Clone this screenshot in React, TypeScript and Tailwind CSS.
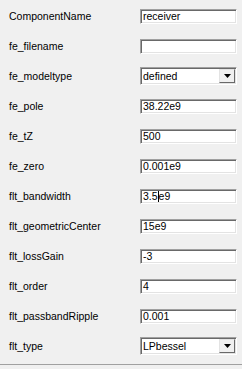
import React from 'react';

type Field = {
  label: string;
  value: string;
  kind?: 'text' | 'select';
  caret?: number;
};

const fields: Field[] = [
  { label: 'ComponentName', value: 'receiver' },
  { label: 'fe_filename', value: '' },
  { label: 'fe_modeltype', value: 'defined', kind: 'select' },
  { label: 'fe_pole', value: '38.22e9' },
  { label: 'fe_tZ', value: '500' },
  { label: 'fe_zero', value: '0.001e9' },
  { label: 'flt_bandwidth', value: '3.5e9', caret: 3 },
  { label: 'flt_geometricCenter', value: '15e9' },
  { label: 'flt_lossGain', value: '-3' },
  { label: 'flt_order', value: '4' },
  { label: 'flt_passbandRipple', value: '0.001' },
  { label: 'flt_type', value: 'LPbessel', kind: 'select' },
];

const sunken =
  'border border-t-[#a0a0a0] border-l-[#a0a0a0] border-b-white border-r-white shadow-[inset_1px_1px_0_#696969,inset_-1px_-1px_0_#e3e3e3] bg-white';

const TextBox: React.FC<{ value: string; caret?: number }> = ({ value, caret }) => (
  <div className={`w-[97px] h-[15px] flex items-center pl-[2px] ${sunken}`}>
    {caret === undefined ? (
      <span>{value}</span>
    ) : (
      <span className="flex items-center">
        {value.slice(0, caret)}
        <span className="inline-block w-px h-[11px] bg-black" />
        {value.slice(caret)}
      </span>
    )}
  </div>
);

const SelectBox: React.FC<{ value: string }> = ({ value }) => (
  <div className={`w-[97px] h-[18px] flex items-center justify-between pl-[2px] pr-px ${sunken}`}>
    <span>{value}</span>
    <div className="w-[16px] h-[14px] bg-[#f0f0f0] border border-t-[#e3e3e3] border-l-[#e3e3e3] border-b-[#696969] border-r-[#696969] flex items-center justify-center">
      <svg width="7" height="4" viewBox="0 0 7 4">
        <path d="M0 0h7L3.5 4z" fill="#000" />
      </svg>
    </div>
  </div>
);

const App: React.FC = () => {
  return (
    <div
      className="w-[242px] h-[369px] bg-[#f0f0f0] text-black text-[10.5px] leading-none"
      style={{ fontFamily: '"Liberation Sans", Arial, sans-serif' }}
    >
      <div className="h-[365px] border-b border-[#a0a0a0] pt-px">
        {fields.map((f) => (
          <div key={f.label} className="h-[30px] flex items-center justify-between pl-[9px] pr-[5px]">
            <span>{f.label}</span>
            {f.kind === 'select' ? (
              <SelectBox value={f.value} />
            ) : (
              <TextBox value={f.value} caret={f.caret} />
            )}
          </div>
        ))}
      </div>
    </div>
  );
};

export default App;
